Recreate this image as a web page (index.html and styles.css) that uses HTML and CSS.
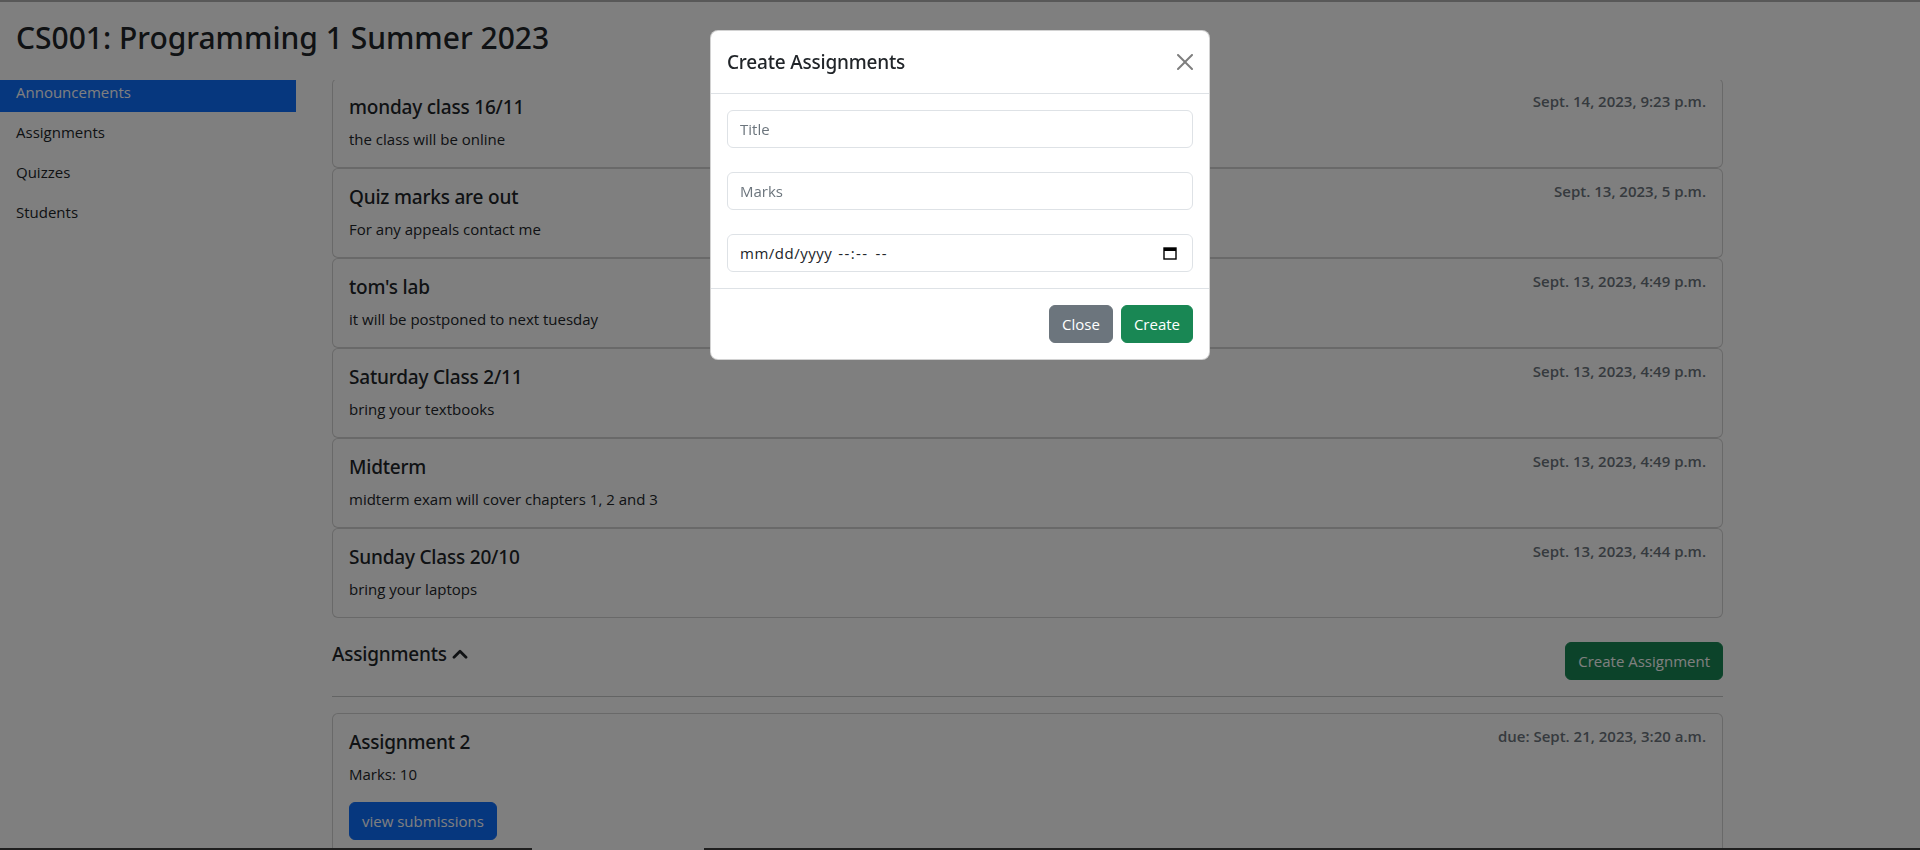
FILE: index.html
```html
<!DOCTYPE html>
<html lang="en">
<head>
<meta charset="utf-8">
<title>CS001: Programming 1 Summer 2023</title>
<link rel="stylesheet" href="styles.css">
</head>
<body>
<header class="page-header">
  <h2 class="course-title">CS001: Programming 1 Summer 2023</h2>
</header>
<div class="layout">
  <nav class="sidebar">
    <a class="nav-link active" href="#">Announcements</a>
    <a class="nav-link" href="#">Assignments</a>
    <a class="nav-link" href="#">Quizzes</a>
    <a class="nav-link" href="#">Students</a>
  </nav>
  <main class="content">
    <section class="announcements">
      <div class="card"><div class="card-body row-between">
        <div><h5 class="card-title">monday class 16/11</h5><p class="card-text">the class will be online</p></div>
        <span class="date">Sept. 14, 2023, 9:23 p.m.</span>
      </div></div>
      <div class="card"><div class="card-body row-between">
        <div><h5 class="card-title">Quiz marks are out</h5><p class="card-text">For any appeals contact me</p></div>
        <span class="date">Sept. 13, 2023, 5 p.m.</span>
      </div></div>
      <div class="card"><div class="card-body row-between">
        <div><h5 class="card-title">tom's lab</h5><p class="card-text">it will be postponed to next tuesday</p></div>
        <span class="date">Sept. 13, 2023, 4:49 p.m.</span>
      </div></div>
      <div class="card"><div class="card-body row-between">
        <div><h5 class="card-title">Saturday Class 2/11</h5><p class="card-text">bring your textbooks</p></div>
        <span class="date">Sept. 13, 2023, 4:49 p.m.</span>
      </div></div>
      <div class="card"><div class="card-body row-between">
        <div><h5 class="card-title">Midterm</h5><p class="card-text">midterm exam will cover chapters 1, 2 and 3</p></div>
        <span class="date">Sept. 13, 2023, 4:49 p.m.</span>
      </div></div>
      <div class="card"><div class="card-body row-between">
        <div><h5 class="card-title">Sunday Class 20/10</h5><p class="card-text">bring your laptops</p></div>
        <span class="date">Sept. 13, 2023, 4:44 p.m.</span>
      </div></div>
    </section>
    <section class="assignments">
      <div class="section-head">
        <h5 class="section-title">Assignments
          <svg class="chevron" width="16" height="10" viewBox="0 0 16 10" aria-hidden="true"><polyline points="2,8.2 8,2.2 14,8.2" fill="none" stroke="#212529" stroke-width="2.8" stroke-linecap="round" stroke-linejoin="round"/></svg>
        </h5>
        <button class="btn btn-success" type="button">Create Assignment</button>
      </div>
      <hr>
      <div class="card"><div class="card-body">
        <div class="row-between">
          <h5 class="card-title">Assignment 2</h5>
          <span class="date">due: Sept. 21, 2023, 3:20 a.m.</span>
        </div>
        <p class="card-text marks">Marks: 10</p>
        <button class="btn btn-primary" type="button">view submissions</button>
      </div></div>
    </section>
  </main>
</div>

<div class="backdrop"></div>
<div class="modal">
  <div class="modal-dialog">
    <div class="modal-content">
      <div class="modal-header">
        <h5 class="modal-title">Create Assignments</h5>
        <button class="btn-close" type="button" aria-label="Close">
          <svg width="16" height="16" viewBox="0 0 16 16" aria-hidden="true"><path fill="#000" d="M.293.293a1 1 0 0 1 1.414 0L8 6.586 14.293.293a1 1 0 1 1 1.414 1.414L9.414 8l6.293 6.293a1 1 0 0 1-1.414 1.414L8 9.414l-6.293 6.293a1 1 0 0 1-1.414-1.414L6.586 8 .293 1.707a1 1 0 0 1 0-1.414z"/></svg>
        </button>
      </div>
      <div class="modal-body">
        <input class="form-control" type="text" placeholder="Title">
        <input class="form-control" type="text" placeholder="Marks">
        <div class="form-control datetime" role="textbox" aria-label="Due date">
          <span class="datetime-text"><span class="dt-date">mm/dd/yyyy</span><span class="dt-time">--:--</span><span class="dt-ampm">--</span></span>
          <svg class="cal-icon" width="16" height="16" viewBox="0 0 16 16" aria-hidden="true">
            <rect x="2" y="3" width="12" height="11" fill="none" stroke="#000" stroke-width="1.4"/>
            <rect x="2" y="3" width="12" height="3" fill="#000"/>
          </svg>
        </div>
      </div>
      <div class="modal-footer">
        <button class="btn btn-secondary" type="button">Close</button>
        <button class="btn btn-success" type="button">Create</button>
      </div>
    </div>
  </div>
</div>
<div class="screen-top"></div>
<div class="screen-bottom"></div>
</body>
</html>
```

FILE: styles.css
```css
* { box-sizing: border-box; }

html, body {
  margin: 0;
  height: 100%;
}

body {
  font-family: "Open Sans", "Noto Sans", "Liberation Sans", sans-serif;
  font-size: 15px;
  line-height: 24px;
  color: #212529;
  background: #fff;
  overflow: hidden;
}

h2, h5 {
  font-family: "Noto Sans", "Open Sans", "Liberation Sans", sans-serif;
  font-weight: 500;
}

h5 {
  letter-spacing: -0.2px;
}

.page-header {
  position: fixed;
  top: 0;
  left: 0;
  right: 0;
  height: 80px;
  padding: 19px 16px 0;
  background: #fff;
  z-index: 5;
}

.course-title {
  margin: 0;
  font-size: 30px;
  line-height: 38px;
}

.layout {
  display: flex;
  align-items: flex-start;
  padding-top: 72px;
}

.sidebar {
  flex: none;
  width: 296px;
  display: flex;
  flex-direction: column;
}

.nav-link {
  display: block;
  padding: 8px 16px;
  color: #212529;
  text-decoration: none;
}

.nav-link.active {
  background: #0d6efd;
  color: #fff;
}

.content {
  flex: none;
  width: 1391px;
  margin-left: 36px;
  padding-top: 6px;
}

.card {
  background: #fff;
  border: 1px solid rgba(0, 0, 0, 0.175);
  border-radius: 6px;
}

.card-body {
  padding: 16px;
}

.row-between {
  display: flex;
  justify-content: space-between;
  align-items: flex-start;
}

.card-title {
  margin: 0 0 8px;
  font-size: 19px;
  line-height: 24px;
}

.card-text {
  margin: 0;
}

.date {
  margin-top: -6px;
  color: #6c757d;
  font-weight: 600;
}

.assignments {
  margin-top: 24px;
}

.section-head {
  display: flex;
  justify-content: space-between;
  align-items: flex-start;
}

.section-title {
  margin: 0;
  display: flex;
  align-items: center;
  gap: 5px;
  font-size: 19px;
  line-height: 24px;
}

.chevron {
  margin-top: -1px;
}

hr {
  margin: 16px 0;
  border: 0;
  border-top: 1px solid #212529;
  opacity: 0.25;
}

.marks {
  margin-bottom: 16px;
}

.btn {
  display: inline-block;
  padding: 6px 12px;
  font-family: inherit;
  font-size: 15px;
  line-height: 24px;
  color: #fff;
  border: 1px solid transparent;
  border-radius: 6px;
  cursor: pointer;
}

.btn-success { background: #198754; border-color: #198754; }
.btn-primary { background: #0d6efd; border-color: #0d6efd; }
.btn-secondary { background: #6c757d; border-color: #6c757d; }

.backdrop {
  position: fixed;
  inset: 0;
  background: rgba(0, 0, 0, 0.5);
  z-index: 10;
}

.modal {
  position: fixed;
  inset: 0;
  z-index: 20;
}

.modal-dialog {
  width: 500px;
  margin: 30px auto 0;
}

.modal-content {
  background: #fff;
  border: 1px solid rgba(0, 0, 0, 0.175);
  border-radius: 8px;
}

.modal-header {
  display: flex;
  align-items: center;
  padding: 16px;
  border-bottom: 1px solid #dee2e6;
}

.modal-title {
  margin: 0;
  font-size: 19px;
  line-height: 30px;
}

.btn-close {
  display: flex;
  margin-left: auto;
  width: 16px;
  height: 16px;
  padding: 0;
  border: 0;
  background: none;
  opacity: 0.5;
  cursor: pointer;
}

.modal-body {
  display: flex;
  flex-direction: column;
  gap: 24px;
  padding: 16px;
}

.form-control {
  display: block;
  width: 100%;
  height: 38px;
  padding: 6px 12px;
  font-family: inherit;
  font-size: 15px;
  line-height: 24px;
  color: #212529;
  background: #fff;
  border: 1px solid #dee2e6;
  border-radius: 6px;
}

.form-control::placeholder {
  color: #6c757d;
}

.datetime {
  display: flex;
  align-items: center;
  justify-content: space-between;
  padding-right: 14px;
}

.datetime-text {
  display: flex;
  white-space: pre;
}

.dt-date {
  letter-spacing: 0.5px;
}

.dt-time {
  margin-left: 6px;
  letter-spacing: 1.4px;
}

.dt-ampm {
  margin-left: 7px;
  letter-spacing: 1.4px;
}

.cal-icon {
  flex: none;
}

.modal-footer {
  display: flex;
  justify-content: flex-end;
  padding: 12px;
  border-top: 1px solid #dee2e6;
}

.modal-footer .btn {
  margin: 4px;
}

.screen-top {
  position: fixed;
  top: 0;
  left: 0;
  right: 0;
  height: 2px;
  background: rgba(0, 0, 0, 0.3);
  z-index: 30;
}

.screen-bottom {
  position: fixed;
  bottom: 0;
  left: 0;
  right: 0;
  height: 2px;
  background: linear-gradient(to right, #1f1f1f 532px, transparent 532px, transparent 704px, #1f1f1f 704px);
  z-index: 30;
}
```
